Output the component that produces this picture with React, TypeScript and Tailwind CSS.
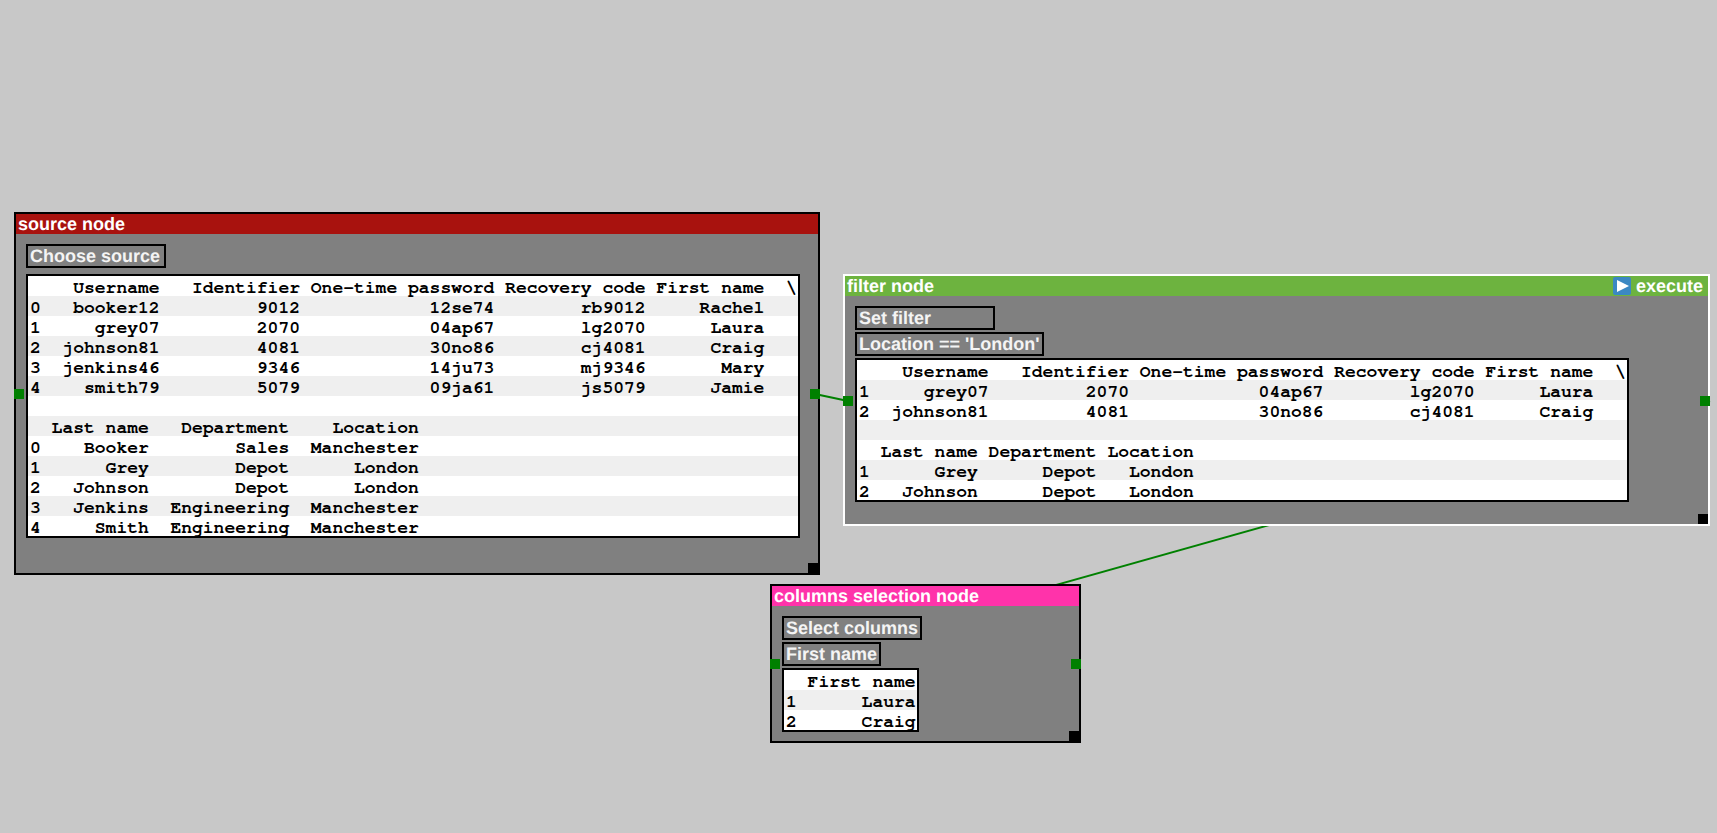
const fmt = (idx: string, cells: string[], ends: number[], tail = '') => {
  let line = idx
  cells.forEach((c, i) => {
    line = line.padEnd(ends[i] - c.length, ' ') + c
  })
  return line + tail
}

const fullEnds = [12, 25, 43, 57, 68]
const restEnds = [11, 24, 36]
const filterEnds = [11, 22, 31]
const firstHeader = ['Username', 'Identifier', 'One-time password', 'Recovery code', 'First name']
const restHeader = ['Last name', 'Department', 'Location']

const sourceLines = [
  fmt(' ', firstHeader, fullEnds, '  \\'),
  fmt('0', ['booker12', '9012', '12se74', 'rb9012', 'Rachel'], fullEnds),
  fmt('1', ['grey07', '2070', '04ap67', 'lg2070', 'Laura'], fullEnds),
  fmt('2', ['johnson81', '4081', '30no86', 'cj4081', 'Craig'], fullEnds),
  fmt('3', ['jenkins46', '9346', '14ju73', 'mj9346', 'Mary'], fullEnds),
  fmt('4', ['smith79', '5079', '09ja61', 'js5079', 'Jamie'], fullEnds),
  ' ',
  fmt(' ', restHeader, restEnds),
  fmt('0', ['Booker', 'Sales', 'Manchester'], restEnds),
  fmt('1', ['Grey', 'Depot', 'London'], restEnds),
  fmt('2', ['Johnson', 'Depot', 'London'], restEnds),
  fmt('3', ['Jenkins', 'Engineering', 'Manchester'], restEnds),
  fmt('4', ['Smith', 'Engineering', 'Manchester'], restEnds),
]

const filterLines = [
  fmt(' ', firstHeader, fullEnds, '  \\'),
  fmt('1', ['grey07', '2070', '04ap67', 'lg2070', 'Laura'], fullEnds),
  fmt('2', ['johnson81', '4081', '30no86', 'cj4081', 'Craig'], fullEnds),
  ' ',
  fmt(' ', restHeader, filterEnds),
  fmt('1', ['Grey', 'Depot', 'London'], filterEnds),
  fmt('2', ['Johnson', 'Depot', 'London'], filterEnds),
]

const columnLines = ['  First name', '1      Laura', '2      Craig']

function DataTable({ lines }: { lines: string[] }) {
  return (
    <div className="w-fit border-2 border-black bg-white text-[18px] text-black">
      {lines.map((line, i) => (
        <pre
          key={i}
          className={`h-[20px] pl-[2px] pr-[1px] leading-[24px] font-bold font-['FreeMono',monospace] ${i % 2 === 1 ? 'bg-[#efefef]' : 'bg-white'}`}
        >
          {line.padEnd(lines[0].length, ' ')}
        </pre>
      ))}
    </div>
  )
}

function NodeButton({ label }: { label: string }) {
  return (
    <div className="w-fit min-w-[140px] h-[24px] border-2 border-black bg-[#808080] px-[2px] text-[18px] leading-[20px] font-bold text-[#f4f4f4] whitespace-pre [text-rendering:geometricPrecision]">
      {label}
    </div>
  )
}

function App() {
  return (
    <div className="relative h-[833px] w-full overflow-hidden bg-[#c8c8c8] font-['Liberation_Sans',Arial,sans-serif]">
      {/* edges, under the nodes */}
      <svg className="absolute inset-0" width="1717" height="833">
        <line x1="815" y1="394" x2="848" y2="401" stroke="#008000" strokeWidth="2" />
        <line x1="1710" y1="401" x2="775" y2="664" stroke="#008000" strokeWidth="2" />
      </svg>

      {/* source node */}
      <div className="absolute left-[14px] top-[212px] w-[806px] h-[363px] border-2 border-black bg-[#808080]">
        <div className="h-[20px] bg-[#a8120e] pl-[2px] text-[18px] leading-[20px] font-bold text-white [text-rendering:geometricPrecision]">source node</div>
        <div className="flex flex-col gap-[6px] pl-[10px] pt-[10px]">
          <NodeButton label="Choose source" />
          <DataTable lines={sourceLines} />
        </div>
        <div className="absolute -left-[2px] top-[175px] w-[10px] h-[10px] bg-[#008000]" />
        <div className="absolute -right-[2px] top-[175px] w-[10px] h-[10px] bg-[#008000]" />
        <div className="absolute -right-[2px] -bottom-[2px] w-[12px] h-[12px] bg-black" />
      </div>

      {/* filter node */}
      <div className="absolute left-[843px] top-[274px] w-[867px] h-[252px] border-2 border-white bg-[#808080]">
        <div className="flex h-[20px] items-center justify-between bg-[#6db33f] pl-[2px] pr-[5px] text-[18px] leading-[20px] font-bold text-white [text-rendering:geometricPrecision]">
          <span>filter node</span>
          <span className="flex items-center gap-[5px]">
            <svg width="18" height="18" viewBox="0 0 18 18">
              <rect width="18" height="18" rx="2" fill="#3b88c3" />
              <path d="M4 3 L16 9 L4 15 Z" fill="#ffffff" />
            </svg>
            execute
          </span>
        </div>
        <div className="flex flex-col gap-[2px] pl-[10px] pt-[10px]">
          <NodeButton label="Set filter" />
          <NodeButton label="Location == 'London'" />
          <DataTable lines={filterLines} />
        </div>
        <div className="absolute -left-[2px] top-[120px] w-[10px] h-[10px] bg-[#008000]" />
        <div className="absolute -right-[2px] top-[120px] w-[10px] h-[10px] bg-[#008000]" />
        <div className="absolute right-0 bottom-0 w-[10px] h-[10px] bg-black" />
      </div>

      {/* columns selection node */}
      <div className="absolute left-[770px] top-[584px] w-[311px] h-[159px] border-2 border-black bg-[#808080]">
        <div className="h-[20px] bg-[#ff33aa] pl-[2px] text-[18px] leading-[20px] font-bold text-white [text-rendering:geometricPrecision]">columns selection node</div>
        <div className="flex flex-col gap-[2px] pl-[10px] pt-[10px]">
          <NodeButton label="Select columns" />
          <div className="w-fit h-[24px] border-2 border-black bg-[#808080] px-[2px] text-[18px] leading-[20px] font-bold text-[#f4f4f4] [text-rendering:geometricPrecision]">First name</div>
          <DataTable lines={columnLines} />
        </div>
        <div className="absolute -left-[2px] top-[73px] w-[10px] h-[10px] bg-[#008000]" />
        <div className="absolute -right-[2px] top-[73px] w-[10px] h-[10px] bg-[#008000]" />
        <div className="absolute -right-[2px] -bottom-[2px] w-[12px] h-[12px] bg-black" />
      </div>
    </div>
  )
}

export default App
